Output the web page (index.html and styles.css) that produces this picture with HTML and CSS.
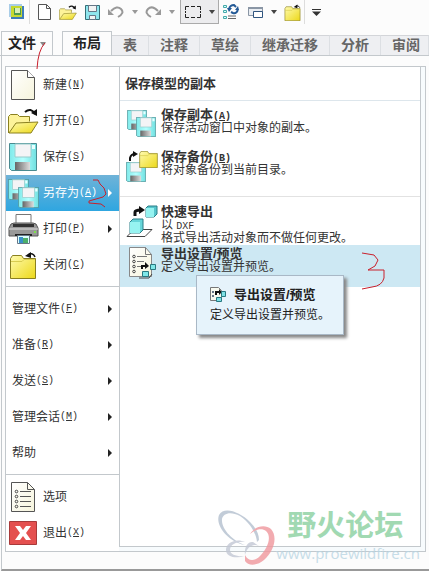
FILE: index.html
```html
<!DOCTYPE html>
<html lang="zh-CN">
<head>
  <meta charset="UTF-8">
  <title>文件菜单</title>
  <meta name="viewport" content="width=device-width, initial-scale=1">
  <link rel="stylesheet" href="styles.css">
</head>
<body>
  <!-- shared icons -->
  <svg class="defs" aria-hidden="true">
    <defs>
      <linearGradient id="gFolder" x1="0" y1="0" x2="1" y2="1">
        <stop offset="0" stop-color="#fffbb0"/><stop offset="1" stop-color="#ecd818"/>
      </linearGradient>
      <linearGradient id="gDisk" x1="0" y1="0" x2="1" y2="0">
        <stop offset="0" stop-color="#7feaea"/><stop offset="0.5" stop-color="#b5ffff"/><stop offset="1" stop-color="#6fe0e0"/>
      </linearGradient>
      <linearGradient id="gMetal" x1="0" y1="0" x2="1" y2="0">
        <stop offset="0" stop-color="#666"/><stop offset="1" stop-color="#ddd"/>
      </linearGradient>
      <linearGradient id="gPaper" x1="0" y1="0" x2="1" y2="1">
        <stop offset="0" stop-color="#fff"/><stop offset="1" stop-color="#f6f4dc"/>
      </linearGradient>
    </defs>
    <symbol id="disk" viewBox="0 0 28 28">
      <path d="M.5 .5h27v27h-25l-2-2z" fill="url(#gDisk)" stroke="#4a8a90"/>
      <path d="M6 1h16v13H6z" fill="#f4f4f6" stroke="#9cc"/>
      <path d="M6 19h15v8H6z" fill="url(#gMetal)"/>
      <path d="M23 2h3v4h-3z" fill="#e8ffff"/>
    </symbol>
    <symbol id="page" viewBox="0 0 24 30">
      <path d="M.5 .5h16l7 7v22H.5z" fill="url(#gPaper)" stroke="#555"/>
      <path d="M16.500 .5v7h7" fill="#fff" stroke="#555"/>
    </symbol>
    <symbol id="folder" viewBox="0 0 26 24">
      <path d="M.5 3.500l2-3h9l2 3h12v20H.5z" fill="url(#gFolder)" stroke="#8a8020"/>
      <path d="M1 6.500h11l2-2h11" fill="none" stroke="#d8cc50"/>
    </symbol>
    <symbol id="openfolder" viewBox="0 0 31 26">
      <path d="M.5 25V8.500l2-2h7l2 2h10v5" fill="#fdf39a" stroke="#8a8020"/>
      <path d="M1 25l7-10 22-1-7 11z" fill="url(#gFolder)" stroke="#8a8020"/>
      <path d="M17 4q6-5 10 2" fill="none" stroke="#111" stroke-width="2"/>
      <path d="M23 5l6 3 0-7z" fill="#111"/>
    </symbol>
    <symbol id="closefolder" viewBox="0 0 28 28">
      <path d="M1.500 7.500l2-3h9l2 3h12v20h-25z" fill="url(#gFolder)" stroke="#8a8020"/>
      <path d="M2 10.500h11l2-2h11" fill="none" stroke="#d8cc50"/>
      <path d="M26 6q-2-5-7-2" fill="none" stroke="#111" stroke-width="1.500"/>
      <path d="M16 5l6-4v6z" fill="#111"/>
    </symbol>
    <symbol id="list" viewBox="0 0 24 30">
      <path d="M.5 .5h16l7 7v22H.5z" fill="url(#gPaper)" stroke="#555"/>
      <path d="M16.500 .5v7h7M9 9.500h11M9 14.500h11M9 19.500h11M9 24.500h11" fill="none" stroke="#555"/>
      <g fill="none" stroke="#444"><circle cx="5.500" cy="9.500" r="1.300"/><circle cx="5.500" cy="14.500" r="1.300"/><circle cx="5.500" cy="19.500" r="1.300"/><circle cx="5.500" cy="24.500" r="1.300"/></g>
    </symbol>
    <symbol id="exportset" viewBox="0 0 28 32">
      <path d="M1.500 .5h16l6 7v22h-22z" fill="url(#gPaper)" stroke="#888"/>
      <path d="M17.500 .5v7h6M9 9.500h10M9 14.500h7M9 19.500h4" fill="none" stroke="#777"/>
      <g fill="none" stroke="#444"><circle cx="6" cy="9.500" r="1.300"/><circle cx="6" cy="14.500" r="1.300"/><circle cx="6" cy="19.500" r="1.300"/><circle cx="6" cy="24.500" r="1.300"/></g>
      <path d="M14 22v-3h4" fill="none" stroke="#111" stroke-width="2"/>
      <path d="M17 15l4 4-4 3z" fill="#111"/>
      <path d="M22.500 17.500h5v5h-5zM14.500 24.500h6v5h-6z" fill="#7fe8e8" stroke="#287880"/>
      <path d="M11 31h10l3-4" fill="none" stroke="#444"/>
    </symbol>
  </svg>

  <header class="toolbar">
    <button class="tool app" aria-label="应用程序">
      <svg width="16" height="16" viewBox="0 0 16 16"><path d="M0 0h13v13H0z" fill="#a9cde8"/><path d="M2 2h13v13H2z" fill="#3d7db8"/><path d="M2 2h11v11H2z" fill="#c6d92f"/><path d="M5 4h7v7H5z" fill="#4d9a50"/><path d="M6 4h5v5H6z" fill="#d9efb5"/></svg>
    </button>
    <button class="tool" aria-label="新建"><svg width="13" height="16" viewBox="0 0 13 16"><path d="M.5 .5h8l4 4v11H.5zM8.500 .5v4h4" fill="#fff" stroke="#555"/></svg></button>
    <button class="tool" aria-label="打开"><svg width="18" height="15"><use href="#openfolder"/></svg></button>
    <button class="tool" aria-label="保存"><svg width="15" height="15" viewBox="0 0 15 15"><path d="M.5 .5h14v14H.5z" fill="#8fe6ee" stroke="#356f78"/><path d="M3.500 .5h8v6h-8zM4.500 10.500h6v4h-6z" fill="#f2f4f4" stroke="#678"/></svg></button>
    <button class="tool" aria-label="撤消"><svg width="16" height="12" viewBox="0 0 16 12"><path d="M3 5Q9-1 13 3t-3 8" fill="none" stroke="#999" stroke-width="2"/><path d="M0 3v6h6z" fill="#999"/></svg></button>
    <button class="caret light" aria-label="撤消列表"></button>
    <button class="tool" aria-label="重做"><svg width="16" height="12" viewBox="0 0 16 12"><path d="M13 5Q7-1 3 3t3 8" fill="none" stroke="#999" stroke-width="2"/><path d="M16 3v6h-6z" fill="#999"/></svg></button>
    <button class="caret light" aria-label="重做列表"></button>
    <div class="split">
      <button class="tool" aria-label="选择"><svg width="16" height="12" viewBox="0 0 16 12"><path d="M.5 4V.5H4M6 .5h4M12 .5h3.500V4M15.500 5v2M15.500 8v3.500H12M10 11.500H6M4 11.500H.5V8M.5 7V5" fill="none" stroke="#222"/></svg></button>
      <button class="caret" aria-label="选择方式"></button>
    </div>
    <button class="tool" aria-label="再生"><svg width="16" height="16" viewBox="0 0 16 16"><path d="M.5 1.500h3v2h-3zM.5 6.500h3v2h-3zM.5 12.500h3v2h-3z" fill="#dff" stroke="#4aa"/><path d="M5 12h8M5 14.500h8" stroke="#666"/><path d="M6 5q1-4 5-4l2 2M15 5q-1 5-5 4L8 8" fill="none" stroke="#245a96" stroke-width="2"/><path d="M4 4h5L6 8zM12 6h4l-1-4z" fill="#245a96"/></svg></button>
    <button class="tool" aria-label="窗口"><svg width="15" height="13" viewBox="0 0 15 13"><path d="M.5 1.500h14v8H.5z" fill="#e9edf2" stroke="#8a96a5"/><path d="M0 1h15v2H0z" fill="#8a96a5"/><path d="M5.500 5.500h9v6h-9z" fill="#fff" stroke="#30557f"/></svg></button>
    <button class="caret" aria-label="窗口列表"></button>
    <button class="tool" aria-label="关闭"><svg width="17" height="17"><use href="#closefolder"/></svg></button>
    <button class="tool customize" aria-label="自定义工具栏"><svg width="9" height="7" viewBox="0 0 9 7"><path d="M0 0h9v1H0zM0 2.500h9L4.500 7z" fill="#333"/></svg></button>
  </header>

  <nav class="tabs">
    <button class="tab file">文件<span class="arrow"></span></button>
    <button class="tab active">布局</button>
    <button class="tab">表</button>
    <button class="tab">注释</button>
    <button class="tab">草绘</button>
    <button class="tab">继承迁移</button>
    <button class="tab">分析</button>
    <button class="tab last">审阅</button>
  </nav>

  <main class="workspace">
    <div class="menu">
      <div class="commands">
        <button class="command"><span class="icon"><svg width="24" height="30"><use href="#page"/></svg></span>新建<span class="key">(<u>N</u>)</span></button>
        <button class="command"><span class="icon"><svg width="31" height="26"><use href="#openfolder"/></svg></span>打开<span class="key">(<u>O</u>)</span></button>
        <button class="command"><span class="icon"><svg width="28" height="28"><use href="#disk"/></svg></span>保存<span class="key">(<u>S</u>)</span></button>
        <button class="command selected sub"><span class="icon"><svg width="31" height="30" viewBox="0 0 31 30"><use href="#disk" width="21" height="21" y="1"/><use href="#disk" x="10" y="9" width="21" height="21"/></svg></span>另存为<span class="key">(<u>A</u>)</span></button>
        <button class="command sub"><span class="icon"><svg width="31" height="30" viewBox="0 0 31 30"><path d="M8 12V.5h15V12" fill="#fff" stroke="#777"/><path d="M3 10l3-1h19l3 1 2 4v8H1v-8z" fill="#999" stroke="#555"/><path d="M5 10h21v3H5z" fill="#333"/><path d="M1 15h29" stroke="#ddd"/><path d="M7 20h17v2H7z" fill="#222"/><path d="M9.500 21.500h12v8h-12z" fill="#dff" stroke="#678"/><path d="M11 23h4v6h-4z" fill="#398fc9"/><path d="M15 24h5v5h-5z" fill="#4cae6b"/><path d="M26 17h2v2h-2z" fill="#7ce34b"/></svg></span>打印<span class="key">(<u>P</u>)</span></button>
        <button class="command"><span class="icon"><svg width="28" height="28"><use href="#closefolder"/></svg></span>关闭<span class="key">(<u>C</u>)</span></button>
        <hr>
        <button class="command plain sub">管理文件<span class="key">(<u>F</u>)</span></button>
        <button class="command plain sub">准备<span class="key">(<u>R</u>)</span></button>
        <button class="command plain sub">发送<span class="key">(<u>S</u>)</span></button>
        <button class="command plain sub">管理会话<span class="key">(<u>M</u>)</span></button>
        <button class="command plain sub">帮助</button>
        <hr>
        <button class="command"><span class="icon"><svg width="24" height="30"><use href="#list"/></svg></span>选项</button>
        <button class="command"><span class="icon"><svg width="28" height="24" viewBox="0 0 28 24"><path d="M.5 .5h27v23H.5z" fill="#e4504f" stroke="#a83a3a"/><path d="M6 5h5l3 4 3-4h5l-5 7 5 7h-5l-3-4-3 4H6l5-7z" fill="#fff"/></svg></span>退出<span class="key">(<u>X</u>)</span></button>
      </div>

      <section class="panel">
        <h2>保存模型的副本</h2>
        <button class="option">
          <span class="icon"><svg width="30" height="30" viewBox="0 0 30 30"><use href="#disk" width="20" height="20" y="2"/><use href="#disk" x="9" y="9" width="20" height="20"/></svg></span>
          <span class="text"><b>保存副本<span class="key">(<u>A</u>)</span></b>保存活动窗口中对象的副本。</span>
        </button>
        <button class="option">
          <span class="icon"><svg width="32" height="32" viewBox="0 0 32 32"><use href="#disk" y="12" width="20" height="20"/><use href="#folder" x="13" y="1" width="19" height="17"/><path d="M4 11V8q1-4 5-4" fill="none" stroke="#111" stroke-width="2"/><path d="M7 1l5 3-5 3z" fill="#111"/></svg></span>
          <span class="text"><b>保存备份<span class="key">(<u>B</u>)</span></b>将对象备份到当前目录。</span>
        </button>
        <hr>
        <button class="option">
          <span class="icon"><svg width="32" height="32" viewBox="0 0 32 32"><path d="M8 24.500h18L19 31.500H1z" fill="#fff" stroke="#444"/><path d="M4 17l3-3h10v11l-3 3H4z" fill="#67d5d9" stroke="#2b7e88"/><path d="M4 17h10v11H4z" fill="#96f3f1"/><path d="M20 3l2-2h9v8l-3 3h-8z" fill="#55c5cc" stroke="#2b7e88"/><path d="M20 3h8v9h-8z" fill="#96f3f1"/><path d="M9 11V7q0-2 6-2" fill="none" stroke="#111" stroke-width="3"/><path d="M13 1l6 4-6 4z" fill="#111"/></svg></span>
          <span class="text"><b>快速导出</b>以 <span class="key">DXF</span><br>格式导出活动对象而不做任何更改。</span>
        </button>
        <button class="option hover" aria-describedby="tip">
          <span class="icon"><svg width="28" height="32"><use href="#exportset"/></svg></span>
          <span class="text"><b>导出设置/预览</b>定义导出设置并预览。</span>
        </button>
        <div class="tooltip" id="tip" role="tooltip">
          <div class="tooltip-title"><svg width="17" height="17" viewBox="0 0 17 17"><path d="M.5 1.500h8l3 3v10H.5z" fill="#f8faf0" stroke="#777"/><path d="M2 5h2v2H2zM2 9h2v2H2z" fill="#678"/><path d="M6 9V6h3" fill="none" stroke="#111" stroke-width="2"/><path d="M9 3l3 3-3 3z" fill="#111"/><path d="M11.500 5.500h4v5h-4zM6.500 11.500h5v4h-5z" fill="#7de0e4" stroke="#287880"/></svg><b>导出设置/预览</b></div>
          <p>定义导出设置并预览。</p>
        </div>
      </section>
    </div>
  </main>

  <div class="watermark">
    <svg width="58" height="56" viewBox="0 0 58 56">
      <path d="M27 35C10 32-3 15 1 5 6-4 22 2 32 12c6 6 9 12 9 18l-2 2C38 22 31 12 22 6 13 1 5 3 4 9c-1 10 11 22 23 26z" fill="#b4c0cf"/>
      <path d="M32 24c5-8 15-10 21-5 7 8 3 22-7 31-7 6-16 6-19 1l0-6c3 6 9 7 15 1 8-8 12-20 6-25-4-3-10-2-16 3z" fill="#f0979d"/>
      <path d="M27 32c-8-4-19 0-19 8 0 7 10 9 19 6-7 1-15-1-15-6 0-6 8-9 15-8zM27 45c-1-8 3-14 8-13l6 4c-5-3-12 0-14 9z" fill="#c3c8d5"/>
    </svg>
    <div class="brand"><strong>野火论坛</strong><span>www.proewildfire.cn</span></div>
  </div>

  <!-- red pen marks -->
  <svg class="mark mark-1" width="10" height="28" viewBox="0 0 10 28"><path d="M9 1Q2 8 1 27"/></svg>
  <svg class="mark mark-2" width="24" height="30" viewBox="0 0 24 30"><path d="M6 2h5l2 4 4 4 2 6-3 3-14 4v2l12 1 4 3"/></svg>
  <svg class="mark mark-3" width="25" height="38" viewBox="0 0 25 38"><path d="M1 1l12 2 4 5-3 6-7 4h16v8q-2 8-12 9L1 37"/></svg>
</body>
</html>
```
FILE: styles.css
```css
:root {
  --fg: #333;
  --line: #c3c8cc;
  --hover: #cde8f3;
  --pen: #c9202c;
  --font: "Liberation Sans", "Noto Sans CJK SC", sans-serif;
}

* {
  box-sizing: border-box;
}

body {
  margin: 0;
  min-height: 100vh;
  display: flex;
  flex-direction: column;
  position: relative;
  overflow-x: hidden;
  background: #fcfcfc;
  color: var(--fg);
  font: 12px/13px var(--font);
}

button {
  margin: 0;
  padding: 0;
  border: 0;
  background: none;
  color: inherit;
  font: inherit;
  text-align: left;
}

hr {
  height: 1px;
  margin: 3px 0 4px;
  border: 0;
  background: var(--line);
}

svg {
  display: block;
}

.defs {
  position: absolute;
  width: 0;
  height: 0;
}

/* quick access toolbar */
.toolbar {
  display: flex;
  height: 24px;
  padding-left: 5px;
}

.tool {
  display: flex;
  flex: none;
  width: 24px;
  align-items: center;
  justify-content: center;
}

.app {
  width: 25px;
  margin-right: 2px;
  border-right: 1px solid #ddd;
}

.caret {
  display: flex;
  flex: none;
  width: 13px;
  align-items: center;
  justify-content: center;
}

.caret::after,
.arrow {
  content: "";
  border: 3px solid transparent;
  border-top: 4px solid #444;
  border-bottom: 0;
}

.caret.light::after {
  border-top-color: #999;
}

.split {
  display: flex;
  margin-left: 2px;
  background: #ececee;
  border: 1px solid #aaa;
  border-top: 0;
}

.customize {
  border-left: 1px solid #ddd;
}

/* ribbon tabs */
.tabs {
  display: flex;
  align-items: flex-end;
  height: 32px;
  border-bottom: 1px solid var(--line);
}

.tab {
  flex: none;
  height: 20px;
  padding: 0 11px;
  border-top: 1px solid #d3d5d9;
  border-right: 1px solid #dcdfe3;
  background: #eeeff2;
  color: #666;
  font-size: 14px;
  font-weight: bold;
  white-space: nowrap;
}

.tab.file,
.tab.active {
  height: 24px;
  border: 1px solid var(--line);
  border-bottom: 0;
  background: #fcfcfc;
  color: #222;
}

.tab.file {
  display: flex;
  align-items: center;
  gap: 4px;
  margin: 0 9px 0 1px;
  padding: 0 6px;
}

.tab.active {
  padding: 0 10px;
}

.arrow {
  border-top-color: #888;
}

.tab.last {
  flex: 1 0 auto;
  padding-right: 0;
}

/* file menu */
.workspace {
  flex: 1;
  margin-left: 1px;
  padding: 10px 3px 16px;
  border-left: 1px solid var(--line);
  border-bottom: 2px solid #999;
}

.menu {
  display: flex;
  border: 1px solid var(--line);
  background: #f7fbfd;
}

.commands {
  flex: none;
  width: 113px;
  background: #fff;
}

.command {
  display: flex;
  align-items: center;
  width: 100%;
  height: 36px;
}

.command .icon {
  display: flex;
  flex: none;
  width: 34px;
  margin-right: 3px;
  justify-content: center;
}

.command.plain {
  padding-left: 6px;
}

.command.sub::after {
  content: "";
  margin: 0 7px 0 auto;
  border: 4px solid transparent;
  border-left-color: #222;
  border-right: 0;
}

.command.selected {
  background: linear-gradient(#6fb3d8, #2fa6e0);
  color: #fff;
}

.command.selected::after {
  border-left-color: #fff;
}

.key {
  font-family: "Liberation Mono", monospace;
  font-size: 10px;
  line-height: 10px;
}

/* save as panel */
.panel {
  position: relative;
  flex: 1;
  min-width: 0;
  margin: 0 4px 4px 0;
  border: 1px solid var(--line);
  border-top: 0;
  background: #fff;
}

.panel h2 {
  margin: 0 0 5px;
  padding: 10px 5px;
  border-bottom: 1px solid #dde6ec;
  font-size: 13px;
  line-height: 13px;
}

.panel hr {
  margin: 6px 0;
  background: #e2e2e2;
}

.option {
  display: flex;
  align-items: flex-start;
  width: 100%;
  min-height: 42px;
  padding: 1px 0 0 6px;
}

.option .icon {
  display: flex;
  flex: none;
  width: 32px;
  height: 32px;
  margin: 1px 3px 0 0;
  justify-content: center;
}

.option b {
  display: block;
  font-size: 13px;
  line-height: 15px;
}

.option.hover {
  background: var(--hover);
}

.tooltip {
  position: absolute;
  top: 208px;
  left: 76px;
  padding: 10px 13px 12px;
  border: 1px solid #a9b8c6;
  background: #e6f3fb;
  box-shadow: 3px 3px 3px #888;
  color: #222;
}

.tooltip-title {
  display: flex;
  align-items: center;
  gap: 7px;
  font-size: 13px;
}

.tooltip p {
  margin: 6px 0 0;
}

/* forum watermark */
.watermark {
  position: absolute;
  right: 9px;
  bottom: 5px;
  display: flex;
  align-items: flex-start;
  opacity: 0.8;
}

.brand strong {
  display: block;
  padding-left: 11px;
  color: #8ad0a0;
  font-size: 29px;
  line-height: 32px;
}

.brand span {
  color: #b9d6e4;
  font: 15px/22px "Open Sans", sans-serif;
}

.mark {
  position: absolute;
  fill: none;
  stroke: var(--pen);
}

.mark-1 {
  top: 42px;
  left: 36px;
}

.mark-2 {
  top: 178px;
  left: 87px;
}

.mark-3 {
  top: 252px;
  left: 361px;
}
```
